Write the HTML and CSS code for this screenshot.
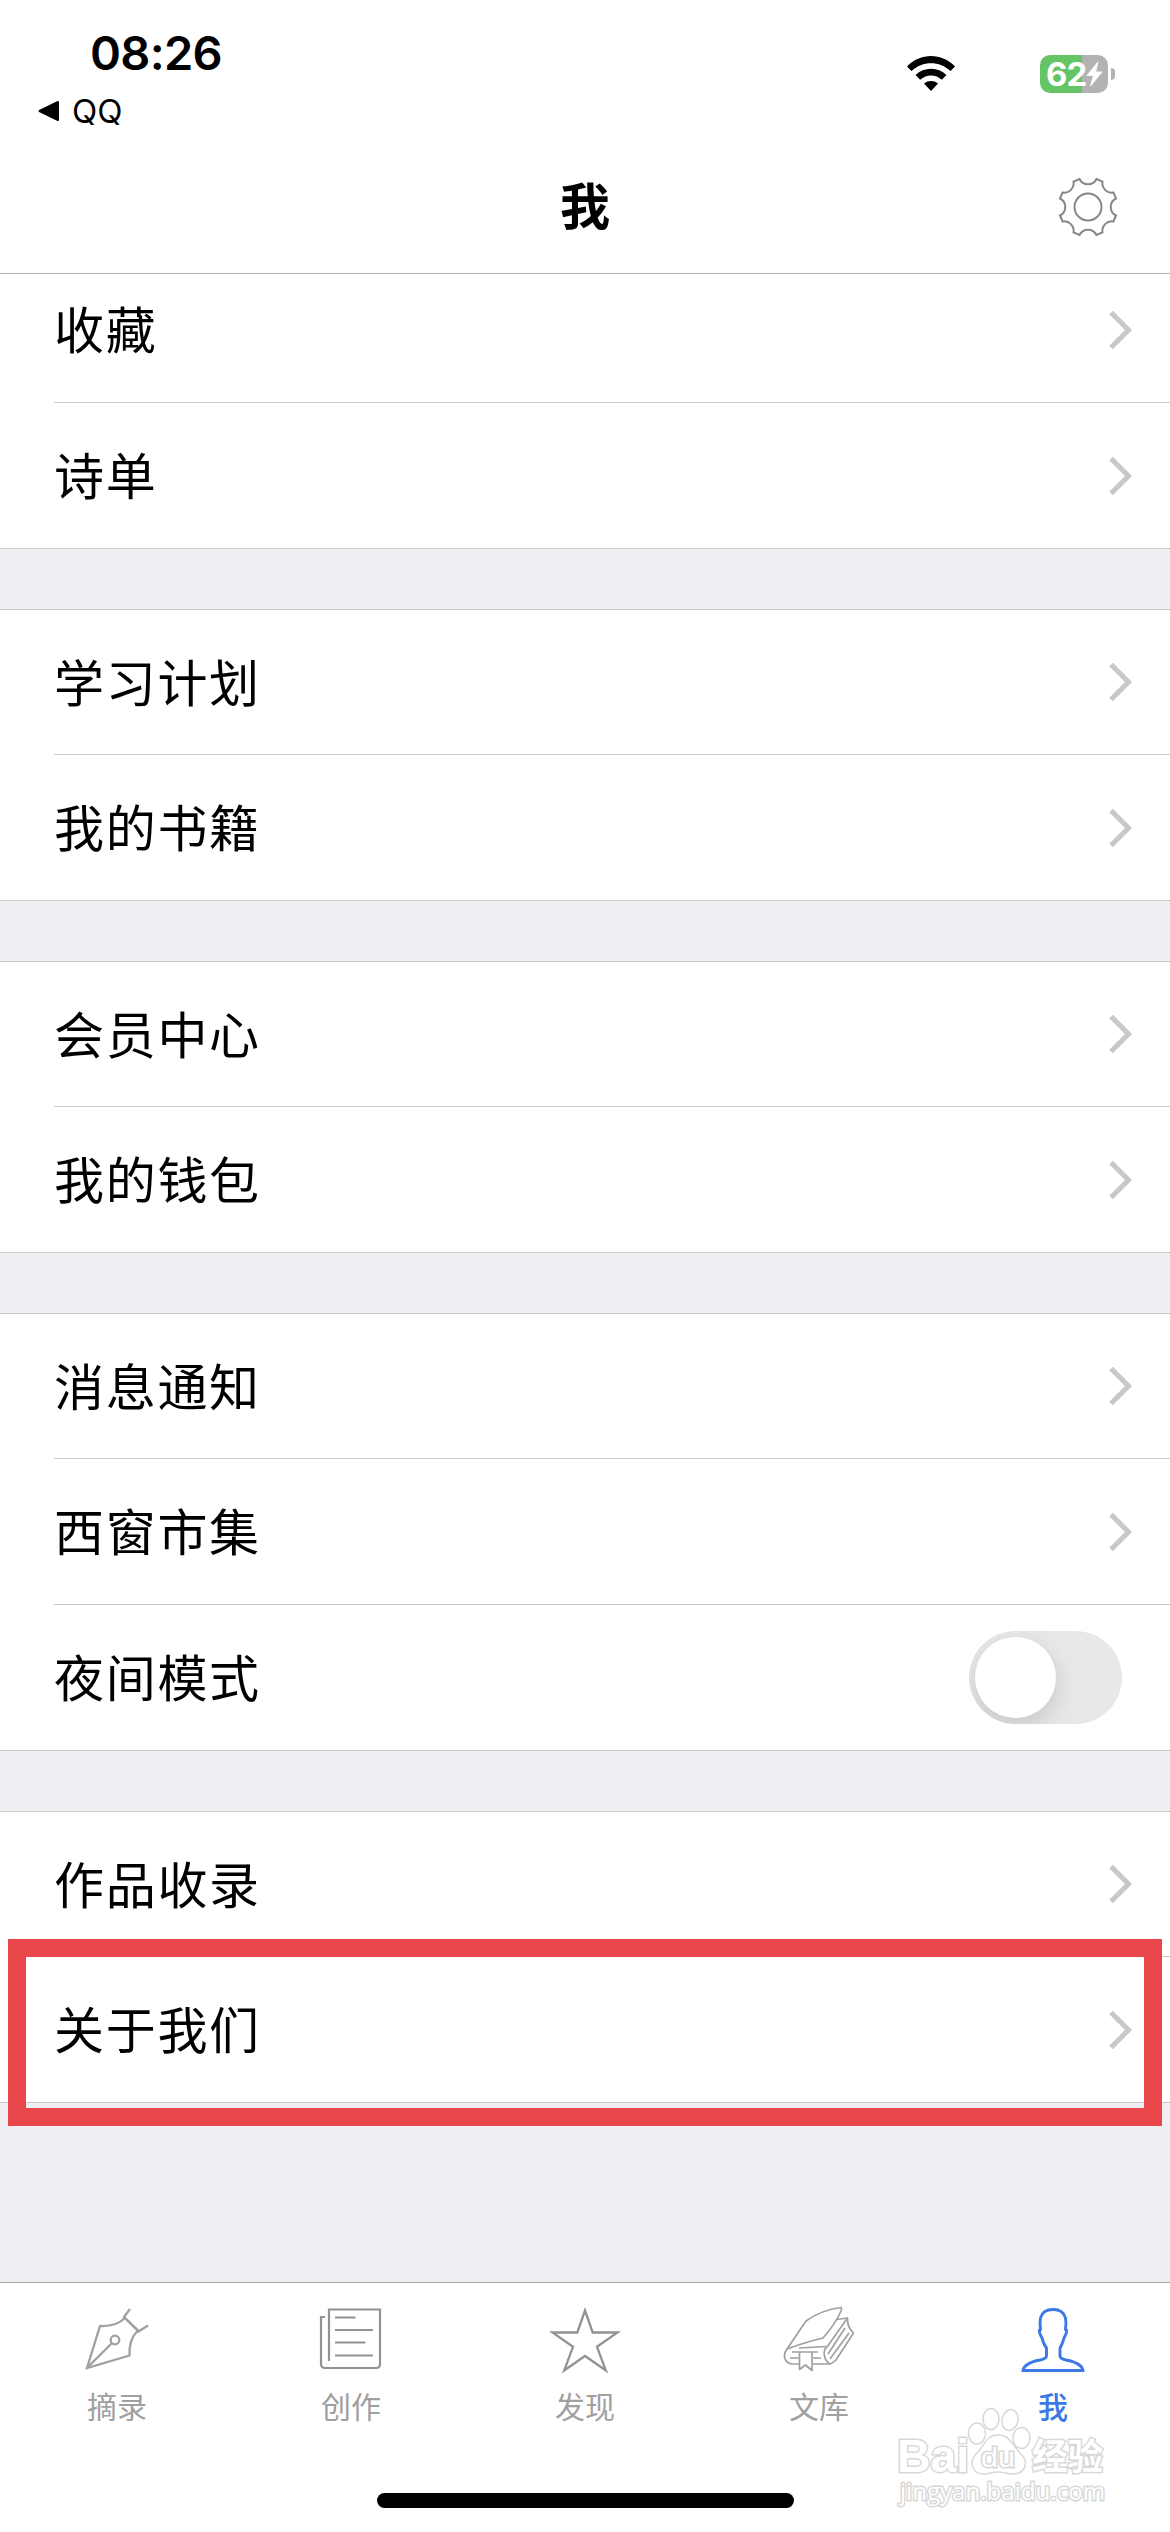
FILE: index.html
```html
<!DOCTYPE html>
<html lang="zh-CN">
	<head>
		<meta charset="UTF-8">
		<title>我</title>
		<link rel="stylesheet" href="styles.css">
	</head>
	<body>
		<!-- 箭头图标 -->
		<svg width="0" height="0" class="defs">
			<symbol id="arrow" viewBox="0 0 26 40"><path d="M3 2.5 20.5 20 3 37.5" fill="none" stroke="#c7c7cc" stroke-width="5"/></symbol>
		</svg>
		<div class="page">
			<div class="header">
				<div class="status">
					<div class="status-left">
						<div class="time">08:26</div>
						<div class="back">
							<svg width="22" height="22" viewBox="0 0 22 22"><path d="M1.5 11 20 2V20Z" stroke="#000" stroke-width="2" stroke-linejoin="round"/></svg>
							<span>QQ</span>
						</div>
					</div>
					<div class="status-right">
						<svg class="wifi" width="50" height="37" viewBox="0 0 50 37">
							<path d="M1 11.5C14-2.500 36-2.500 49 11.500L44.500 16C33.500 5.500 16.500 5.500 5.500 16Z"/>
							<path d="M9.500 20C18 11.500 32 11.500 40.500 20L35.800 24.700C29.500 19 20.500 19 14.200 24.700Z"/>
							<path d="M18 28.500C22 25.200 28 25.200 32 28.500L25 36Z"/>
						</svg>
						<div class="battery">
							<span>62</span>
							<svg width="17" height="26" viewBox="0 0 17 26"><path d="M12 1 1 14.500H7.500L4.500 25 16 11H9.500Z" fill="#fff" stroke="#fff" stroke-linejoin="round"/></svg>
						</div>
						<i class="cap"></i>
					</div>
				</div>
				<div class="nav">
					<h1>我</h1>
					<svg class="gear" width="60" height="60" viewBox="-30 -30 60 60" fill="none" stroke="#868686" stroke-width="2">
						<path d="M-8.500-28A9.500 9.500 0 0 0 8.500-28L14.500-25.500A9.500 9.500 0 0 0 25.500-14.500L28-8.500A9.500 9.500 0 0 0 28 8.500L25.500 14.500A9.500 9.500 0 0 0 14.500 25.500L8.500 28A9.500 9.500 0 0 0-8.500 28L-14.500 25.500A9.500 9.500 0 0 0-25.500 14.500L-28 8.500A9.500 9.500 0 0 0-28-8.500L-25.500-14.500A9.500 9.500 0 0 0-14.500-25.500Z"/>
						<circle r="13.500"/>
					</svg>
				</div>
			</div>

			<div class="list">
				<ul class="group first">
					<li><span>收藏</span><svg class="arrow"><use href="#arrow"/></svg></li>
					<li><span>诗单</span><svg class="arrow"><use href="#arrow"/></svg></li>
				</ul>
				<ul class="group">
					<li><span>学习计划</span><svg class="arrow"><use href="#arrow"/></svg></li>
					<li><span>我的书籍</span><svg class="arrow"><use href="#arrow"/></svg></li>
				</ul>
				<ul class="group">
					<li><span>会员中心</span><svg class="arrow"><use href="#arrow"/></svg></li>
					<li><span>我的钱包</span><svg class="arrow"><use href="#arrow"/></svg></li>
				</ul>
				<ul class="group">
					<li><span>消息通知</span><svg class="arrow"><use href="#arrow"/></svg></li>
					<li><span>西窗市集</span><svg class="arrow"><use href="#arrow"/></svg></li>
					<li><span>夜间模式</span><div class="switch"><i></i></div></li>
				</ul>
				<ul class="group">
					<li><span>作品收录</span><svg class="arrow"><use href="#arrow"/></svg></li>
					<li class="mark"><span>关于我们</span><svg class="arrow"><use href="#arrow"/></svg></li>
				</ul>
			</div>

			<div class="footer">
				<ul class="tabs">
					<li>
						<svg width="74" height="74" viewBox="0 0 74 74" fill="none" stroke="#a0a0a0" stroke-width="2.300">
							<path d="M7 65 20 23C31 23.500 39 21 45 15L58 27.500C51 34 49 42 49.500 52.500Z"/>
							<path d="M7 65 32 40M50 6 44 14 58.500 28.500 68 22.500"/>
							<circle cx="35" cy="37" r="4.300"/>
						</svg>
						<span>摘录</span>
					</li>
					<li>
						<svg width="74" height="74" viewBox="0 0 74 74" fill="none" stroke="#929292" stroke-width="2.200">
							<path d="M15 58V6.500H66V61Q66 65 62 65H11Q7 65 7 61V14H11"/>
							<path d="M21 14.500H41.500M21 27H59M21 39.500H51.500M21 52.500H59"/>
						</svg>
						<span>创作</span>
					</li>
					<li>
						<svg width="74" height="74" viewBox="0 0 74 74" fill="none" stroke="#929292" stroke-width="2.300">
							<path d="M37 7.500 44.700 29.500H69.500L49 43.800 57.800 67.500 37 53 16.200 67.500 25 43.800 4.500 29.500H29.300Z"/>
						</svg>
						<span>发现</span>
					</li>
					<li>
						<svg width="74" height="74" viewBox="0 0 74 74" fill="none" stroke="#a0a0a0" stroke-width="1.700" stroke-linejoin="round">
							<path d="M5 46 24 18C35 10 47 6 59 4.500Q60 5 59 8C54 20 48 27 41 35Q24 39 5 46Q2 50 2.500 54Q4 61 11 61H17M31 61H48Q51 60 54 57L71.500 30Q65 24 65.500 15L45 44Q41 47 42.500 53 43.500 58 48 61"/>
							<path d="M65.500 15 55 16.500M44 43.500 17 45M10 49H36M8 55H17M31 55H39M63 25 46 51M67 30 48 56"/>
							<path d="M17.500 49V66.500L23.500 62 30 67.500V49"/>
						</svg>
						<span>文库</span>
					</li>
					<li class="active">
						<svg width="74" height="74" viewBox="0 0 74 74" fill="none" stroke="#3c78e6" stroke-width="2.900">
							<path d="M7 67.500H67C66 61 58 58.500 50 57Q44 55.500 44 53V45Q46 42 48 35Q51 30 50.500 27L49.500 26.500Q50.500 20 49.500 15C48 9 43 6.500 37 6.500S26 9 24.500 15Q23.500 20 24.500 26.500L23.500 27Q23 30 26 35Q28 42 30.500 45V53Q30.500 55.500 24 57C16 58.500 8 61 7 67.500Z"/>
						</svg>
						<span>我</span>
					</li>
				</ul>
				<div class="home"></div>
				<!-- 水印 -->
				<svg class="watermark" width="220" height="112" viewBox="0 0 220 112" fill="#fff" stroke="#d8d8d8" stroke-width="1.500">
					<text class="wm-b" x="2" y="67" textLength="72" lengthAdjust="spacingAndGlyphs">Bai</text>
					<ellipse cx="82" cy="28.500" rx="8.500" ry="10.500"/>
					<ellipse cx="96" cy="14" rx="8" ry="10.500"/>
					<ellipse cx="115" cy="15" rx="8" ry="10.500" transform="rotate(12 115 15)"/>
					<ellipse cx="126.500" cy="33" rx="8.500" ry="10.500"/>
					<path d="M103 30C115 30 117 40 125 48C135 57 130 69 118 69C111 69 110 67 103 67S95 69 89 69C77 69 73 57 82 48C90 40 91 30 103 30Z"/>
					<text class="wm-d" x="86" y="62" textLength="34" lengthAdjust="spacingAndGlyphs">du</text>
					<text class="wm-c" x="137" y="65" textLength="71" lengthAdjust="spacingAndGlyphs">经验</text>
					<text class="wm-u" x="5" y="95" textLength="205" lengthAdjust="spacingAndGlyphs">jingyan.baidu.com</text>
				</svg>
			</div>
		</div>
	</body>
</html>
```

FILE: styles.css
```css
*{
	padding: 0;
	margin: 0;
	box-sizing: border-box;
}
li{
	list-style: none;
}
body{
	width: 1170px;
	font-family: Inter, "Noto Sans CJK SC", sans-serif;
	color: #000;
	background-color: #fff;
}
.defs{
	position: absolute;
}
.page{
	height: 2532px;
	display: flex;
	flex-direction: column;
	overflow: hidden;
	background-color: #eeeef3;
}
/*顶部*/
.header{
	height: 274px;
	flex: none;
	background-color: #fff;
	border-bottom: 1px solid #b2b2b2;
	position: relative;
	z-index: 2;
}
.status{
	height: 140px;
	display: flex;
	justify-content: space-between;
}
.status-left{
	padding: 24px 0 0 38px;
}
.time{
	margin-left: 52px;
	height: 58px;
	line-height: 58px;
	font-size: 47px;
	font-weight: 600;
	letter-spacing: -0.7px;
}
.back{
	display: flex;
	align-items: center;
	height: 58px;
	font-size: 33px;
}
.back span{
	margin-left: 12px;
}
.status-right{
	display: flex;
	align-items: flex-start;
	padding: 55px 55px 0 0;
}
.battery{
	width: 68px;
	height: 38px;
	margin-left: 83px;
	border-radius: 10px;
	background: linear-gradient(to right, #65c466 42px, #b3b3b3 42px);
	display: flex;
	align-items: center;
	padding-left: 6px;
	color: #fff;
	font-size: 33px;
	font-weight: 700;
}
.battery span{
	width: 40px;
	letter-spacing: -1px;
}
.cap{
	width: 4px;
	height: 12px;
	margin: 13px 0 0 3px;
	border-radius: 0 6px 6px 0;
	background-color: #b3b3b3;
}
.wifi{
	margin-right: 1px;
}
.nav{
	height: 133px;
	display: grid;
	grid-template-columns: 1fr auto 1fr;
	align-items: center;
}
.nav h1{
	grid-column: 2;
	font-size: 50px;
	line-height: 60px;
	font-weight: 700;
}
.gear{
	justify-self: end;
	margin-right: 52px;
}
/*列表*/
.list{
	height: 2008px;
	flex: none;
}
.group{
	margin-bottom: 60px;
	background-color: #fff;
	border-top: 1px solid #c8c7cc;
	border-bottom: 1px solid #c8c7cc;
}
.group.first{
	margin-top: -17px;
	border-top: 0;
}
.group li{
	height: 146px;
	margin-left: 54px;
	padding-right: 36px;
	display: flex;
	align-items: center;
	justify-content: space-between;
	border-bottom: 1px solid #c8c7cc;
	font-size: 50px;
	letter-spacing: 1.7px;
}
.group li:first-child{
	height: 145px;
}
.group.first li:first-child{
	height: 146px;
}
.group li:last-child{
	height: 145px;
	border-bottom: 0;
}
.group span{
	padding-bottom: 5px;
}
.arrow{
	width: 26px;
	height: 40px;
}
.switch{
	width: 153px;
	height: 93px;
	margin-right: 12px;
	padding: 6px;
	border-radius: 47px;
	background-color: #e8e8ea;
	overflow: hidden;
}
.switch i{
	display: block;
	width: 81px;
	height: 81px;
	border-radius: 50%;
	background-color: #fff;
	box-shadow: 0 9px 24px rgba(0,0,0,0.15);
}
/*红框*/
.mark{
	position: relative;
}
.mark::after{
	content: "";
	box-sizing: border-box;
	position: absolute;
	left: -46px;
	right: 8px;
	top: -18px;
	height: 187px;
	border: 18px solid #e9464b;
}
/*底部*/
.footer{
	flex: 1;
	position: relative;
	border-top: 1px solid #a3a3aa;
	background-color: #fff;
}
.tabs{
	display: flex;
	height: 210px;
}
.tabs li{
	width: 234px;
	padding-top: 20px;
	display: flex;
	flex-direction: column;
	align-items: center;
	color: #a0a0a0;
	font-size: 30px;
	line-height: 40px;
}
.tabs span{
	margin-top: 10px;
}
.tabs .active{
	color: #3c78e6;
	font-weight: 500;
}
.home{
	width: 417px;
	height: 15px;
	margin: 0 auto;
	border-radius: 8px;
	background-color: #000;
}
.watermark{
	position: absolute;
	left: 895px;
	top: 122px;
}
.watermark text{
	paint-order: stroke;
	stroke-width: 3px;
}
.wm-b{
	font: 700 47px "Liberation Sans", sans-serif;
}
.wm-d{
	font: 400 28px "Liberation Sans", sans-serif;
}
.wm-c{
	font: 700 36px "Noto Sans CJK SC", sans-serif;
}
.wm-u{
	font: 400 24px "Open Sans", sans-serif;
}
```
